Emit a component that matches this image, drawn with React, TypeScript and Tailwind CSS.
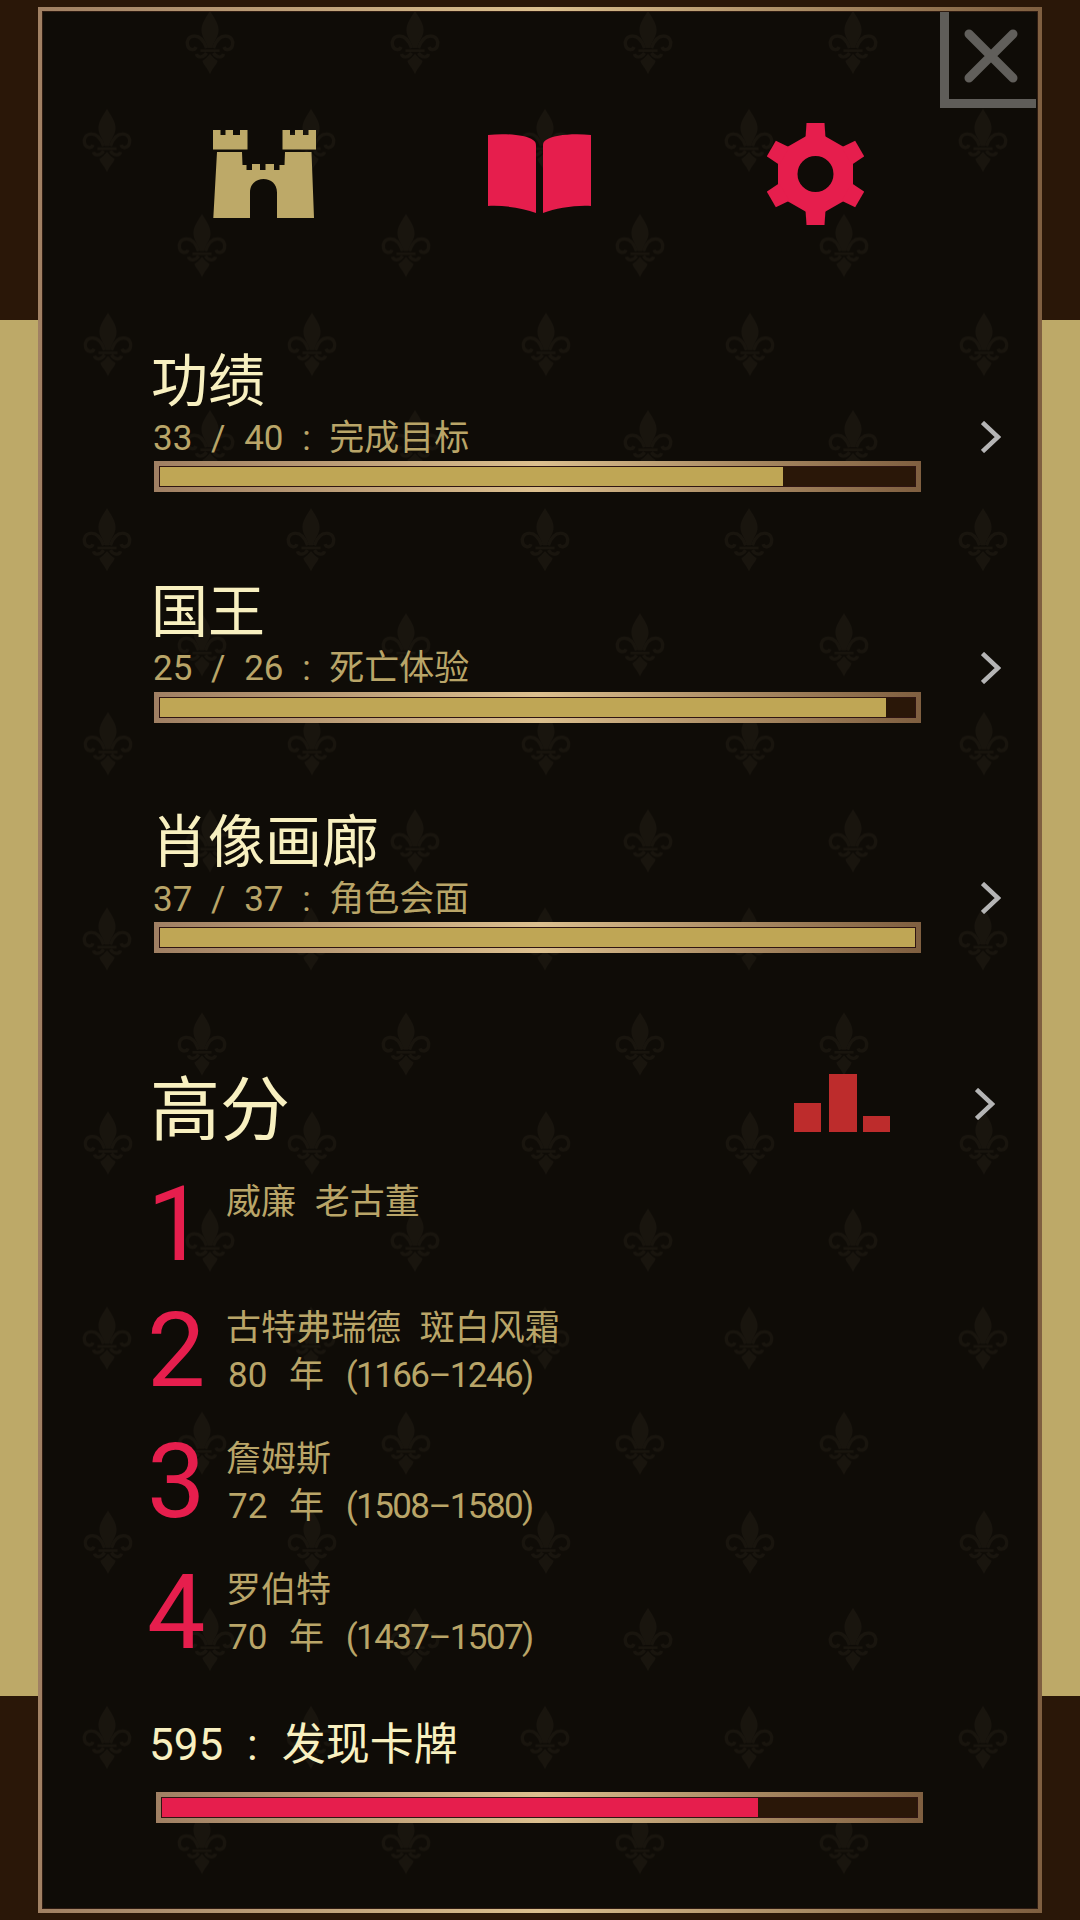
const sections = [
  { title: '功绩', done: 33, total: 40, label: '完成目标' },
  { title: '国王', done: 25, total: 26, label: '死亡体验' },
  { title: '肖像画廊', done: 37, total: 37, label: '角色会面' },
];

const scores = [
  { rank: 1, name: '威廉 老古董', years: '', range: '' },
  { rank: 2, name: '古特弗瑞德 斑白风霜', years: '80 年', range: '(1166–1246)' },
  { rank: 3, name: '詹姆斯', years: '72 年', range: '(1508–1580)' },
  { rank: 4, name: '罗伯特', years: '70 年', range: '(1437–1507)' },
];

// fleur centres inside one wallpaper tile
const fleurs = [
  [160, 43], [365, 43],
  [57, 141], [261, 141],
  [152, 246], [356, 246],
  [58, 345], [262, 345],
];

function Wallpaper() {
  return (
    <svg className="pointer-events-none absolute inset-0 h-full w-full" aria-hidden="true">
      <defs>
        <g id="fleur">
          <path
            fill="#19150e"
            d="M24.5 0C28 6 33 12 33 19C33 26 28 30 26.5 37L22.5 37C21 30 16 26 16 19C16 12 21 6 24.5 0ZM24.5 63C22 57 18 54 17 50C20 48 22 46 24.5 43C27 46 29 48 32 50C31 54 27 57 24.5 63ZM15 38.5H34V41H15Z"
          />
          <path
            fill="none"
            stroke="#19150e"
            strokeWidth="3.2"
            d="M21 37C19 31 15 25 9 25C3 25 1 30 2 34C3 39 9 40 10.5 36M28 37C30 31 34 25 40 25C46 25 48 30 47 34C46 39 40 40 38.5 36M21 42C18 47 12 47 11 43M28 42C31 47 37 47 38 43"
          />
        </g>
        <pattern id="tile" patternUnits="userSpaceOnUse" x="7" y="-12" width="438" height="399.25">
          {fleurs.map(([x, y]) => (
            <use key={`${x}-${y}`} href="#fleur" x={x - 24.5} y={y - 32} />
          ))}
        </pattern>
      </defs>
      <rect width="100%" height="100%" fill="url(#tile)" />
    </svg>
  );
}

function Side() {
  return (
    <div className="flex w-[38px] shrink-0 flex-col">
      <div className="h-[320px]" />
      <div className="flex-1 bg-[#bda968]" />
      <div className="h-[224px]" />
    </div>
  );
}

function Bar({ percent, color }: { percent: number; color: string }) {
  return (
    <div className="h-[31px] w-[767px] bg-linear-to-r from-[#a08063] via-[#dcc08f] via-50% to-[#7f5f40] p-[5px]">
      <div className="h-full border border-[#2f1512] bg-[#2a1708]">
        <div className={`h-full ${color}`} style={{ width: `${percent}%` }} />
      </div>
    </div>
  );
}

function Chevron() {
  return (
    <svg width="20" height="32" viewBox="0 0 20 32" fill="none" stroke="#b5b5b5" strokeWidth="4.5">
      <path d="M1.5 1.5L17 16L1.5 30.5" />
    </svg>
  );
}

function CastleIcon() {
  return (
    <svg width="103" height="88" viewBox="0 0 103 88" fill="#bda968">
      <path d="M0 0H7.5V5H12.5V0H20V5H27V0H34.5V19.5H0Z" />
      <path d="M69.5 0H77V5H82V0H90V5H95.5V0H103V19.5H69.5Z" />
      <path
        fillRule="evenodd"
        d="M4 22H29L29.5 35H33.5V40H39V34H47V40H52.5V34H61V40H66.5V35H71.5L72 22H98.5L101 88H64V62.5C64 54 58 49 50.5 49C43 49 37 54 37 62.5V88H0.3Z"
      />
    </svg>
  );
}

function BookIcon() {
  return (
    <svg width="103" height="80" viewBox="0 0 103 80" fill="#e61e4d">
      <path d="M0 1C18 -1 38 1 45 6C47.5 7.5 48 9 48 12V79C35 74 15 71 0 72Z" />
      <path d="M103 1C85 -1 65 1 58 6C55.5 7.5 55 9 55 12V79C68 74 88 71 103 72Z" />
    </svg>
  );
}

function GearIcon() {
  return (
    <svg width="97" height="102" viewBox="-48.5 -51 97 102" fill="#e61e4d">
      <path fillRule="evenodd" d="M0 -43.3L37.5 -21.65V21.65L0 43.3L-37.5 21.65V-21.65ZM18 0A18 18 0 1 0 -18 0A18 18 0 1 0 18 0Z" />
      {[0, 60, 120, 180, 240, 300].map((deg) => (
        <path key={deg} d="M-9 -51H9L10 -36H-10Z" transform={`rotate(${deg})`} />
      ))}
    </svg>
  );
}

function RankingIcon() {
  return (
    <svg width="96" height="58" viewBox="0 0 96 58" fill="#bd2c2c">
      <rect x="0" y="29" width="27" height="29" />
      <rect x="35" y="0" width="28" height="58" />
      <rect x="69" y="42" width="27" height="16" />
    </svg>
  );
}

export default function App() {
  return (
    <div className="flex h-[1920px] w-[1080px] bg-[#2a1708] font-['Roboto','Noto_Sans_CJK_SC',sans-serif] [word-spacing:10px]">
      <Side />
      <div className="w-[1004px] py-[7px]">
        <div className="h-full bg-linear-to-r from-[#a08063] via-[#dcc08f] via-50% to-[#7f5f40] p-[4px]">
          <div className="relative h-full overflow-hidden border border-[#2f1c12] bg-[#0f0c07]">
            <Wallpaper />

            <div className="absolute right-[1px] top-0 flex h-[96px] w-[96px] items-center justify-center border-b-[9px] border-l-[9px] border-[#5f5d59] pr-[3px]">
              <svg width="56" height="56" viewBox="0 0 56 56" stroke="#615f5b" strokeWidth="9" strokeLinecap="round">
                <path d="M6 6L50 50M50 6L6 50" />
              </svg>
            </div>

            <div className="relative flex flex-col">
              <div className="ml-[170px] mt-[111px] flex h-[102px] items-center">
                <CastleIcon />
                <div className="ml-[172px]">
                  <BookIcon />
                </div>
                <div className="ml-[176px]">
                  <GearIcon />
                </div>
              </div>

              <div className="ml-[110px] mt-[126px] flex flex-col gap-[89.5px]">
                {sections.map((s) => (
                  <div key={s.title} className="flex flex-col">
                    <div className="-ml-[2px] h-[56px] text-[57px] leading-[62px] text-[#f8f0c0]">{s.title}</div>
                    <div className="flex h-[54px] w-[848px] items-center justify-between pt-[6px]">
                      <span className="pt-[3px] text-[35px] leading-[40px] text-[#b9a568]">
                        {s.done} / {s.total} : {s.label}
                      </span>
                      <Chevron />
                    </div>
                    <div className="ml-[1px]">
                      <Bar percent={(s.done / s.total) * 100} color="bg-[#bfa655]" />
                    </div>
                  </div>
                ))}
              </div>

              <div className="ml-[110px] mt-[120px] flex h-[70px]">
                <div className="-ml-[3px] w-[644px] text-[70px] leading-[76px] text-[#f8f0c0]">高分</div>
                <div className="mt-[1px]">
                  <RankingIcon />
                </div>
                <div className="ml-[85px] mt-[15px]">
                  <Chevron />
                </div>
              </div>

              <div className="ml-[103px] mt-[35px] flex flex-col gap-[37px]">
                {scores.map((s) => (
                  <div key={s.rank} className={`flex ${s.rank === 1 ? 'h-[89px]' : 'h-[94px]'}`}>
                    <div className="w-[80px] pl-[1px] text-[104px] leading-[94px] text-[#e61e4d]">{s.rank}</div>
                    <div className="flex flex-col pt-[1px] text-[35px] leading-[47px] text-[#b9a568]">
                      <span>{s.name}</span>
                      {s.years && (
                        <span className="ml-[2px] [word-spacing:13px]">
                          {s.years} <span className="tracking-[-1.6px]">{s.range}</span>
                        </span>
                      )}
                    </div>
                  </div>
                ))}
              </div>

              <div className="ml-[106px] mt-[53px] h-[60px] text-[44px] leading-[64px] text-[#f8f0c0] [word-spacing:13px]">
                595 : 发现卡牌
              </div>
              <div className="ml-[113px] mt-[19px]">
                <Bar percent={79} color="bg-[#e61e4d]" />
              </div>
            </div>
          </div>
        </div>
      </div>
      <Side />
    </div>
  );
}
